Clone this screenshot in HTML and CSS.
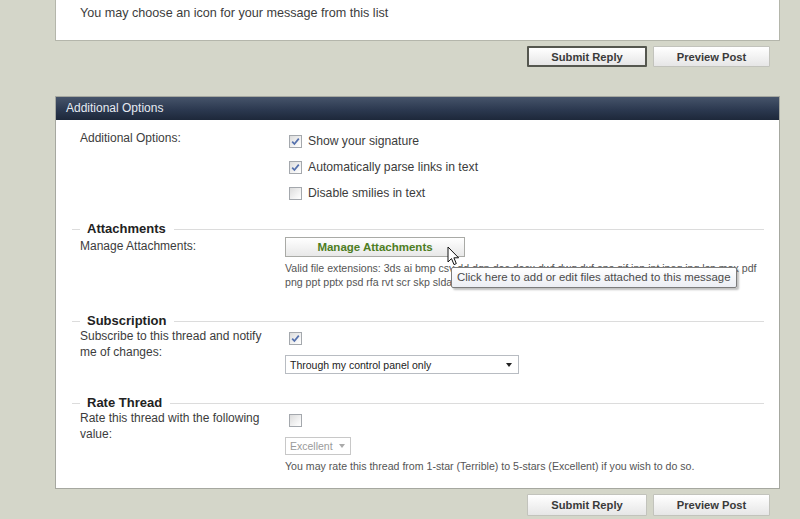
FILE: index.html
```html
<!DOCTYPE html>
<html>
<head>
<meta charset="utf-8">
<link rel="stylesheet" href="styles.css">
</head>
<body>
<div class="page">
  <div class="top-panel">
    <p class="top-text">You may choose an icon for your message from this list</p>
  </div>
  <div class="actions">
    <button class="btn btn-focus">Submit Reply</button>
    <button class="btn">Preview Post</button>
  </div>

  <div class="panel">
    <div class="panel-head">Additional Options</div>
    <div class="panel-body">
      <div class="row">
        <div class="label label-opts">Additional Options:</div>
        <div class="ctrl">
          <div class="cb-line"><span class="cb checked"><svg viewBox="0 0 13 13" width="13" height="13"><path d="M3.2 6.6 L5.4 9 L9.8 3.6" fill="none" stroke="#5470ad" stroke-width="1.7"/></svg></span>Show your signature</div>
          <div class="cb-line"><span class="cb checked"><svg viewBox="0 0 13 13" width="13" height="13"><path d="M3.2 6.6 L5.4 9 L9.8 3.6" fill="none" stroke="#5470ad" stroke-width="1.7"/></svg></span>Automatically parse links in text</div>
          <div class="cb-line"><span class="cb"></span>Disable smilies in text</div>
        </div>
      </div>

      <div class="legend legend-attach"><span class="legend-text">Attachments</span></div>
      <div class="row">
        <div class="label label-single">Manage Attachments:</div>
        <div class="ctrl ctrl-attach">
          <button class="btn-manage">Manage Attachments</button>
          <div class="small-text">
            <div class="line">Valid file extensions: 3ds ai bmp csv dd dgn doc docx dwf dwg dxf eps gif inp int jpeg jpg lsp max pdf</div>
            <div class="line">png ppt pptx psd rfa rvt scr skp slda</div>
          </div>
          <svg class="cursor" viewBox="0 0 13 21" width="13" height="21"><path d="M1 1 L1 16 L4.5 12.6 L7 18.6 L9.3 17.6 L6.9 11.8 L11.6 11.8 Z" fill="#fff" stroke="#111" stroke-width="1" stroke-linejoin="round"/></svg>
          <div class="tooltip">Click here to add or edit files attached to this message</div>
        </div>
      </div>

      <div class="legend legend-sub"><span class="legend-text">Subscription</span></div>
      <div class="row">
        <div class="label label-double">Subscribe to this thread and notify<br>me of changes:</div>
        <div class="ctrl">
          <div class="cb-single"><span class="cb checked"><svg viewBox="0 0 13 13" width="13" height="13"><path d="M3.2 6.6 L5.4 9 L9.8 3.6" fill="none" stroke="#5470ad" stroke-width="1.7"/></svg></span></div>
          <div class="select select-sub"><span>Through my control panel only</span><span class="arrow"></span></div>
        </div>
      </div>

      <div class="legend legend-rate"><span class="legend-text">Rate Thread</span></div>
      <div class="row">
        <div class="label label-double">Rate this thread with the following<br>value:</div>
        <div class="ctrl">
          <div class="cb-single"><span class="cb"></span></div>
          <div class="select select-rate"><span>Excellent</span><span class="arrow arrow-grey"></span></div>
          <div class="small-text rate-note">You may rate this thread from 1-star (Terrible) to 5-stars (Excellent) if you wish to do so.</div>
        </div>
      </div>
    </div>
  </div>

  <div class="actions actions-bottom">
    <button class="btn">Submit Reply</button>
    <button class="btn">Preview Post</button>
  </div>
</div>
</body>
</html>
```
FILE: styles.css
```css
* { box-sizing: border-box; }
html, body { margin: 0; padding: 0; }
body {
  background: #d4d6c9;
  font-family: "Liberation Sans", Arial, sans-serif;
  color: #3a3a3a;
  width: 800px;
  height: 519px;
  overflow: hidden;
}
.page {
  margin-left: 55px;
  width: 725px;
}
.top-panel {
  background: #fff;
  border: 1px solid #b4b6ab;
  border-top: 0;
  height: 41px;
  padding: 5px 24px 0;
}
.top-text {
  margin: 0;
  font-size: 12.6px;
  line-height: 16px;
  color: #3c3c3c;
}
.actions {
  display: flex;
  justify-content: flex-end;
  gap: 6px;
  padding-right: 10px;
  margin-top: 5px;
}
.btn {
  font-family: "Liberation Sans", Arial, sans-serif;
  font-weight: bold;
  font-size: 11.2px;
  color: #3a3a3a;
  height: 21px;
  width: 117px;
  padding: 0;
  border: 1px solid #c2c3bc;
  background: linear-gradient(#ffffff, #f0f0f0 60%, #e6e6e6);
  border-radius: 1px;
}
.btn-focus {
  width: 120px;
  border: 2px solid #55574f;
}
.actions-bottom { margin-top: 5px; }
.actions-bottom .btn { height: 22px; }
.actions-bottom .btn:first-child { width: 120px; }

.panel {
  margin-top: 29px;
  border: 1px solid #a6a8a0;
  background: #fff;
}
.panel-head {
  height: 23px;
  line-height: 23px;
  padding-left: 10px;
  font-size: 12px;
  color: #e6ebf2;
  background: linear-gradient(#46546a, #2c3950 55%, #1d283a);
}
.panel-body {
  padding: 8px 15px 15px 24px;
}
.row {
  display: flex;
  align-items: flex-start;
}
.label {
  width: 205px;
  flex: none;
  font-size: 12px;
  line-height: 16px;
  color: #3c3c3c;
}
.label-opts { margin-top: 2px; }
.label-single { margin-top: 1px; }
.ctrl {
  flex: 1;
  position: relative;
}
.cb-line {
  height: 26px;
  display: flex;
  align-items: center;
  gap: 6px;
  padding-left: 4px;
  font-size: 12.2px;
  color: #3c3c3c;
}
.cb-single {
  height: 20px;
  display: flex;
  align-items: center;
  padding-left: 4px;
}
.cb {
  width: 13px;
  height: 13px;
  flex: none;
  border: 1px solid #a4a8ad;
  background: linear-gradient(135deg, #dcdcdc, #f6f6f6 70%, #ffffff);
  position: relative;
  display: block;
}
.cb svg {
  position: absolute;
  left: -1px;
  top: -1px;
}

.legend {
  display: flex;
  align-items: center;
  margin-left: -8px;
  margin-right: 0;
  height: 14px;
  font-weight: bold;
  font-size: 13px;
  color: #222;
}
.legend::before {
  content: "";
  width: 8px;
  border-top: 1px solid #dcdcdc;
  margin-right: 7px;
}
.legend::after {
  content: "";
  flex: 1;
  border-top: 1px solid #dcdcdc;
  margin-left: 8px;
}
.legend-text { line-height: 14px; }
.legend-attach { margin-top: 16px; margin-bottom: 1px; }
.legend-sub { margin-top: 25px; }
.legend-rate { margin-top: 22px; }

.btn-manage {
  display: block;
  width: 180px;
  height: 20px;
  padding: 0;
  border: 1px solid #a9aaa6;
  background: linear-gradient(#ffffff, #f1f1f1 60%, #e8e8e8);
  font-family: "Liberation Sans", Arial, sans-serif;
  font-weight: bold;
  font-size: 11.5px;
  color: #4d7d1f;
}
.small-text {
  font-size: 10.6px;
  line-height: 14px;
  color: #555;
}
.ctrl-attach .small-text { margin-top: 4px; }
.line { white-space: nowrap; }
.cursor {
  position: absolute;
  left: 162px;
  top: 9px;
}
.tooltip {
  position: absolute;
  left: 166px;
  top: 30px;
  width: 286px;
  height: 21px;
  line-height: 19px;
  padding-left: 5px;
  font-size: 11.4px;
  color: #4a4a4a;
  white-space: nowrap;
  border: 1px solid #7c7c7c;
  border-radius: 2px;
  background: linear-gradient(#ffffff, #eceef4);
  box-shadow: 2px 2px 2px rgba(0,0,0,0.25);
}

.select {
  display: flex;
  align-items: center;
  justify-content: space-between;
  border: 1px solid #b8bcc2;
  background: #fff;
  font-size: 10.5px;
  color: #222;
  padding: 0 5px 0 4px;
}
.select-sub {
  width: 234px;
  height: 19px;
  margin-top: 7px;
}
.select-rate {
  width: 66px;
  height: 18px;
  margin-top: 7px;
  color: #9a9a9a;
  border-color: #c8c8c8;
  padding-right: 4px;
}
.arrow {
  width: 0;
  height: 0;
  border-left: 3.5px solid transparent;
  border-right: 3.5px solid transparent;
  border-top: 4px solid #222;
  margin-right: 1px;
}
.arrow-grey { border-top-color: #aaa; }
.rate-note { margin-top: 4px; }
```
